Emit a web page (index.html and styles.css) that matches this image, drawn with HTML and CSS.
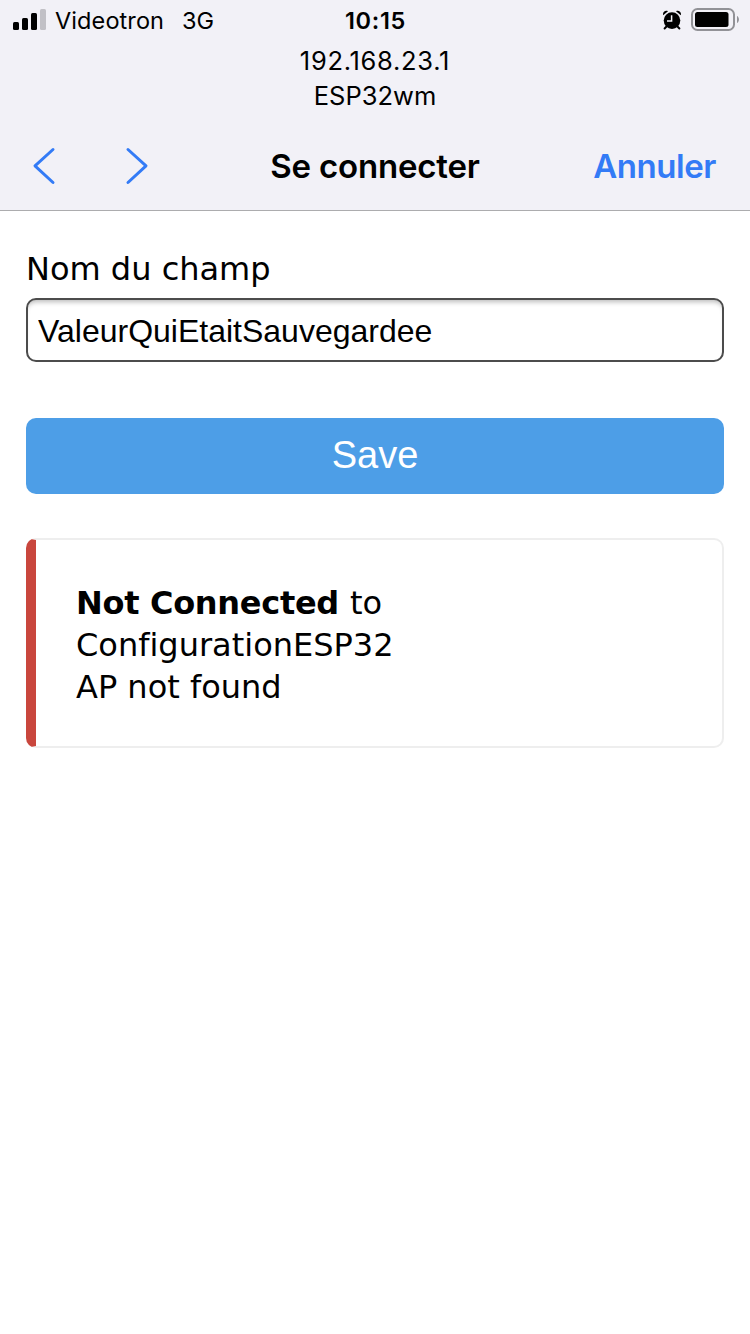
FILE: index.html
```html
<!DOCTYPE html>
<html lang="fr">
<head>
<meta charset="utf-8">
<title>Se connecter</title>
<link rel="stylesheet" href="styles.css">
</head>
<body>
<header class="header">
  <div class="status">
    <div class="status-left">
      <svg class="signal" width="34" height="22" viewBox="0 0 34 22">
        <rect x="0" y="13" width="6" height="8" rx="1.5"/>
        <rect x="9" y="9" width="6" height="12" rx="1.5"/>
        <rect x="18" y="4" width="6" height="17" rx="1.5"/>
        <rect class="signal-off" x="27" y="0" width="6" height="21" rx="1.5"/>
      </svg>
      <span class="carrier">Videotron</span>
      <span class="network">3G</span>
    </div>
    <span class="time">10:15</span>
    <div class="status-right">
      <svg class="alarm" width="20" height="20" viewBox="0 0 20 20">
        <circle cx="10" cy="10.6" r="8.3"/>
        <path d="M1.2 5.2C.2 2.2 3.2-.1 6 1.2zM18.8 5.2c1-3-2-5.300-4.800-4z"/>
        <path class="alarm-feet" d="M4.500 16.500 2.600 18.500M15.500 16.500l1.900 2"/>
        <path class="alarm-hands" d="M9.600 5.300v5.600H5"/>
      </svg>
      <svg class="battery" width="50" height="24" viewBox="0 0 50 24">
        <rect class="battery-shell" x="1" y="1" width="42" height="21" rx="5.500"/>
        <rect x="4" y="4" width="33.500" height="15" rx="2.500"/>
        <path class="battery-tip" d="M46 8c2.600 1.200 2.600 5.800 0 7z"/>
      </svg>
    </div>
  </div>
  <div class="host"><span class="ip">192.168.23.1</span><span class="ssid">ESP32wm</span></div>
  <nav class="nav">
    <div class="arrows">
      <svg width="24" height="38" viewBox="0 0 24 38"><path d="M21 2.500 3 18.800 21 35.500"/></svg>
      <svg width="24" height="38" viewBox="0 0 24 38"><path d="M3 2.500 21 18.800 3 35.500"/></svg>
    </div>
    <h1 class="title">Se connecter</h1>
    <a class="cancel">Annuler</a>
  </nav>
</header>
<main class="content">
  <label class="label" for="field">Nom du champ</label>
  <input class="field" id="field" type="text" value="ValeurQuiEtaitSauvegardee">
  <button class="save">Save</button>
  <div class="message">
    <div class="state"><strong>Not Connected</strong><span>to</span></div>
    <div class="target">ConfigurationESP32</div>
    <div>AP not found</div>
  </div>
</main>
</body>
</html>
```
FILE: styles.css
```css
* { box-sizing: border-box; }
body {
  margin: 0;
  min-height: 1334px;
  background: #fff;
  color: #000;
  font-family: "DejaVu Sans", Verdana, sans-serif;
}
svg { display: block; flex: none; }
.header {
  height: 211px;
  background: #f2f1f7;
  border-bottom: 1px solid #acacae;
  font-family: Inter, sans-serif;
}
.status {
  display: grid;
  grid-template-columns: 1fr auto 1fr;
  align-items: center;
  height: 42px;
  padding: 1px 9px 2px 13px;
  font-size: 24px;
  line-height: 30px;
}
.status-left, .status-right { display: flex; align-items: center; }
.status-left svg { margin-top: -1px; }
.status-right { justify-content: flex-end; gap: 9px; margin-top: -1px; }
.signal-off { fill: #c1c0c6; }
.carrier { margin-left: 8px; font-size: 23.500px; letter-spacing: .1px; }
.network { margin-left: 18px; font-size: 23.500px; }
.time { margin-right: 3px; font-weight: 600; font-size: 23.500px; letter-spacing: .7px; }
.alarm-feet { stroke: #000; stroke-width: 2; stroke-linecap: round; }
.alarm-hands { fill: none; stroke: #f2f1f7; stroke-width: 1.500px; }
.battery-shell { fill: none; stroke: #929297; stroke-width: 2; }
.battery-tip { fill: #929297; }
.host {
  display: flex;
  flex-direction: column;
  align-items: center;
  padding-top: 1px;
  font-size: 25.500px;
  line-height: 35px;
}
.ip { letter-spacing: .7px; }
.nav {
  display: grid;
  grid-template-columns: 1fr auto 1fr;
  align-items: center;
  height: 86px;
  margin-top: 10px;
  padding: 0 34px 0 32px;
}
.arrows { display: flex; gap: 69px; }
.arrows path {
  fill: none;
  stroke: #337bf6;
  stroke-width: 3;
  stroke-linecap: round;
  stroke-linejoin: round;
}
.title {
  margin: 0 0 0 2px;
  font-size: 33px;
  font-weight: 600;
  letter-spacing: -.2px;
}
.cancel {
  justify-self: end;
  color: #337bf6;
  font-size: 33px;
  font-weight: 600;
  letter-spacing: -.45px;
}
.content {
  display: flex;
  flex-direction: column;
  padding: 37px 26px 0;
  font-size: 32px;
}
.label { line-height: 42px; margin-bottom: 8px; }
.field {
  height: 64px;
  padding: 2px 10px 0;
  border: 2px solid #4c4c4c;
  border-radius: 10px;
  background: #fff;
  box-shadow: inset 0 5px 5px -3px #bbb;
  color: #000;
  font: 32px "Liberation Sans", Arial, sans-serif;
  outline: none;
}
.save {
  height: 76px;
  margin-top: 56px;
  padding: 0 0 2px;
  border: 0;
  border-radius: 10px;
  background: #4d9ee7;
  color: #fff;
  font: 38px/74px "Liberation Sans", Arial, sans-serif;
}
.message {
  height: 210px;
  margin-top: 44px;
  padding: 42px 40px 40px;
  border: 2px solid #eee;
  border-left: 10px solid #c9463d;
  border-radius: 10px;
  line-height: 42px;
}
.state { display: flex; gap: 11px; }
.state strong { letter-spacing: -.3px; }
.target { font-variant-ligatures: none; }
```
